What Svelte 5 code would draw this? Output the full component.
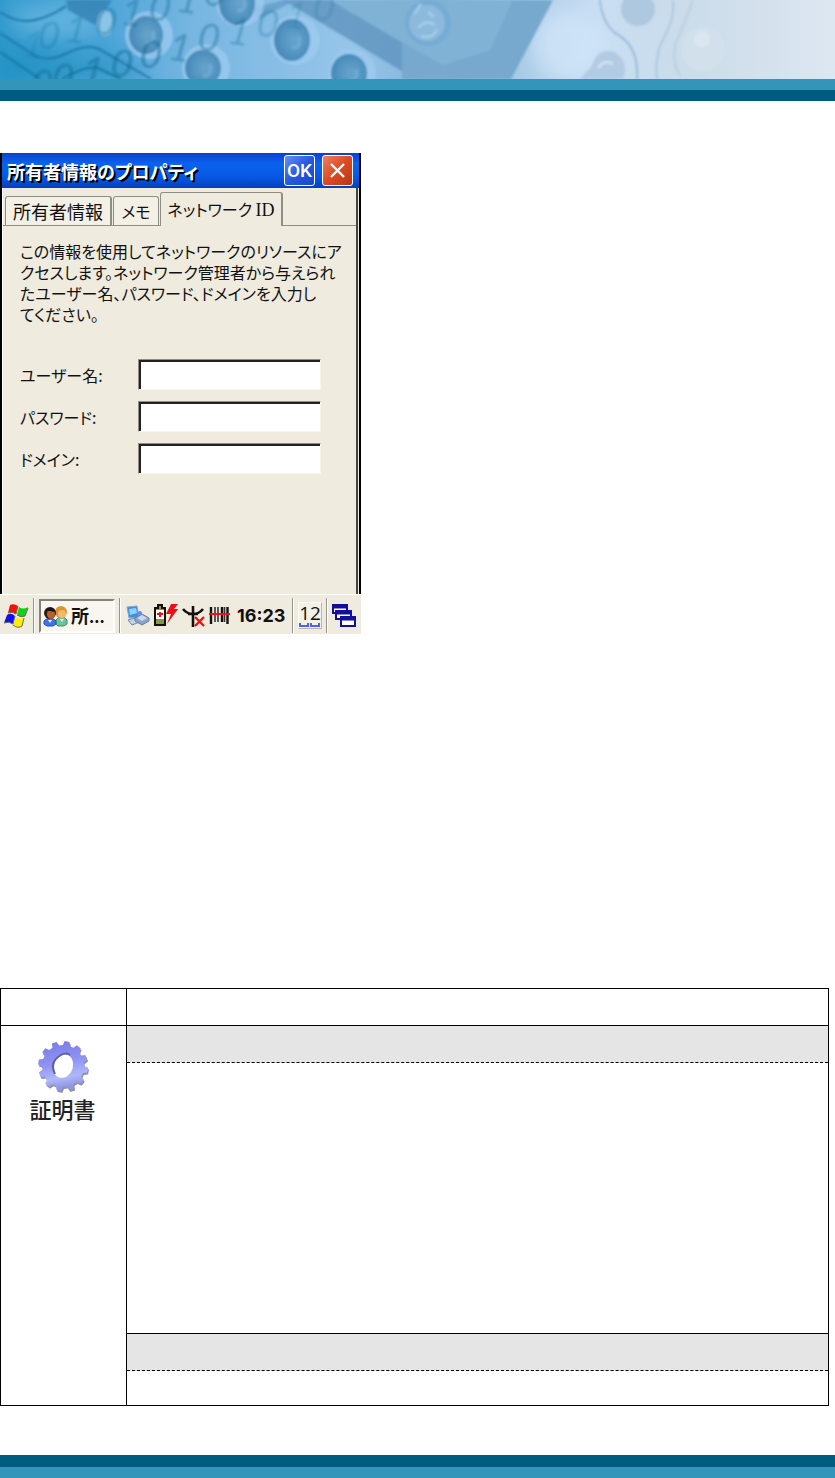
<script>
  const lines = [
    'この情報を使用してネットワークのリソースにア',
    'クセスします。ネットワーク管理者から与えられ',
    'たユーザー名、パスワード、ドメインを入力し',
    'てください。'
  ];
  const fields = [
    { id: 'user', label: 'ユーザー名:', type: 'text' },
    { id: 'password', label: 'パスワード:', type: 'password' },
    { id: 'domain', label: 'ドメイン:', type: 'text' }
  ];
  const vias = [
    { x: 146, y: 35, rx: 17, ry: 19, ring: 24 },
    { x: 203, y: 68, rx: 18, ry: 18, ring: 24 },
    { x: 237, y: 3, rx: 18, ry: 22, ring: 24 },
    { x: 292, y: 40, rx: 18, ry: 21, ring: 25 },
    { x: 349, y: 73, rx: 18, ry: 19, ring: 24 }
  ];
  const bits = [
    { t: '1', x: 33, y: 45, o: 0.3 }, { t: '0', x: 49, y: 36, o: 0.5 }, { t: '1', x: 76, y: 30, o: 0.5 },
    { t: '0', x: 106, y: 22, o: 0.7 }, { t: '1', x: 132, y: 13, o: 0.7 }, { t: '0', x: 160, y: 8, o: 0.8 },
    { t: '1', x: 188, y: 0, o: 0.8 }, { t: '0', x: 215, y: -7, o: 0.8 },
    { t: '0', x: 42, y: 84, o: 1 }, { t: '0', x: 63, y: 78, o: 1 }, { t: '1', x: 93, y: 71, o: 1 },
    { t: '0', x: 122, y: 64, o: 1 }, { t: '0', x: 151, y: 55, o: 1 }, { t: '1', x: 180, y: 48, o: 0.8 },
    { t: '0', x: 209, y: 38, o: 0.8 }, { t: '1', x: 239, y: 32, o: 0.6 }, { t: '0', x: 268, y: 24, o: 0.5 },
    { t: '1', x: 296, y: 16, o: 0.3 }, { t: '0', x: 324, y: 8, o: 0.3 }
  ];

  function gear(cx, cy, count) {
    const points = [];
    const step = (Math.PI * 2) / count;
    for (let i = 0; i < count; i++) {
      for (const [r, at] of [[21, 0], [25, 0.12], [25, 0.5], [21, 0.65]]) {
        const a = (i + at) * step;
        points.push(`${(cx + r * Math.cos(a)).toFixed(1)} ${(cy + r * Math.sin(a)).toFixed(1)}`);
      }
    }
    return `M${points.join('L')}Z`;
  }
</script>

<div class="page">
  <header>
    <svg class="banner" viewBox="0 0 835 79" preserveAspectRatio="none" aria-hidden="true">
      <defs>
        <linearGradient id="sky" x1="0" x2="1" y1="0" y2="0">
          <stop offset="0" stop-color="#2c98cc" />
          <stop offset="0.13" stop-color="#4ea6d8" />
          <stop offset="0.23" stop-color="#76b6e1" />
          <stop offset="0.42" stop-color="#97c5e9" />
          <stop offset="0.53" stop-color="#7fb3d9" />
          <stop offset="0.62" stop-color="#a9cae6" />
          <stop offset="0.72" stop-color="#c9def2" />
          <stop offset="0.83" stop-color="#cbdcea" />
          <stop offset="1" stop-color="#dde7f1" />
        </linearGradient>
        <radialGradient id="ball" cx="0.55" cy="0.5" r="0.6">
          <stop offset="0" stop-color="#68a4cd" />
          <stop offset="0.6" stop-color="#5193c0" />
          <stop offset="1" stop-color="#4285b2" />
        </radialGradient>
        <linearGradient id="shade" x1="0" x2="0" y1="0" y2="1">
          <stop offset="0" stop-color="#fff" stop-opacity="0.12" />
          <stop offset="0.5" stop-color="#1583b8" stop-opacity="0.02" />
          <stop offset="1" stop-color="#007ba9" stop-opacity="0.4" />
        </linearGradient>
        <filter id="soft" x="-20%" y="-20%" width="140%" height="140%"><feGaussianBlur stdDeviation="1" /></filter>
        <filter id="glow" x="-50%" y="-50%" width="200%" height="200%"><feGaussianBlur stdDeviation="9" /></filter>
      </defs>
      <rect width="835" height="79" fill="url(#sky)" />
      <path d="M0 0H75L150 79H0Z" fill="url(#shade)" filter="url(#glow)" />
      <ellipse cx="55" cy="22" rx="45" ry="16" fill="#86c8ee" opacity="0.4" filter="url(#glow)" />
      <ellipse cx="568" cy="45" rx="35" ry="35" fill="#d3e7fa" opacity="0.7" filter="url(#glow)" />
      <g filter="url(#soft)">
        <path d="M66 0H112L95 25L68 10Z" fill="#3584b6" opacity="0.85" />
        <ellipse cx="105" cy="23" rx="8" ry="13" fill="#9dceed" opacity="0.75" />
        <path d="M0 12Q18 24 35 20T66 6" fill="none" stroke="#2079a8" stroke-width="2" />
        <path d="M0 33L32 54Q47 63 65 54Q87 43 99 49L151 79" fill="none" stroke="#2079a8" stroke-width="2" />
        <path d="M0 52L40 79M62 79Q86 65 98 68L121 79" fill="none" stroke="#137ba0" stroke-width="2" />
        <path d="M283 0H345L420 52V79H415Z" fill="#6297c1" opacity="0.85" />
        <path d="M330 0H512L490 50L443 65L415 50Z" fill="#80b2d6" />
        <path d="M512 0H553L511 79H402V42L415 50L443 65L490 50Z" fill="#77a8ce" />
        <path d="M252 8L284 0L290 3L260 19Z" fill="#5693c0" opacity="0.6" />
        {#each vias as v}
          <ellipse cx={v.x + 3} cy={v.y} rx={v.ring} ry={v.ring} fill="#9dcbf0" opacity="0.75" />
          <ellipse cx={v.x} cy={v.y} rx={v.rx} ry={v.ry} fill="url(#ball)" />
          <path d="M{v.x} {v.y + 8}q10 0 7 -12" fill="none" stroke="#87bee3" stroke-width="4" opacity="0.4" />
        {/each}
        <circle cx="428" cy="23" r="23" fill="#75acd3" />
        <circle cx="427" cy="23" r="18" fill="#8bbadc" />
        <path d="M414 14L421 4M418 28q8 -9 17 -3M421 36q12 4 16 -7M428 12l6 5" stroke="#a3cae5" stroke-width="3" fill="none" />
        <path d="M580 79L592 66Q596 50 610 51A17 19 0 0 1 623 79Z" fill="#b2cbe3" />
        <path d="M598 68Q604 59 613 64" stroke="#d0e1f2" stroke-width="3" fill="none" />
        <path d="M600 0Q602 22 615 33Q639 45 637 79" fill="none" stroke="#9bbdd9" stroke-width="2" />
        <path d="M673 0Q675 17 665 36Q654 54 657 79" fill="none" stroke="#afc8de" stroke-width="2" />
        <path d="M693 0Q683 27 676 42Q671 62 680 76" fill="none" stroke="#bdcfdf" stroke-width="2" />
        <circle cx="638" cy="8" r="21" fill="#c8dced" />
        <circle cx="638" cy="9" r="17" fill="#adc8df" />
        <circle cx="703" cy="49" r="22" fill="#d2e0eb" />
        <circle cx="702" cy="39" r="8" fill="#dbe7f0" />
      </g>
      <g class="bits" filter="url(#soft)">
        {#each bits as b}
          <text transform="translate({b.x} {b.y}) rotate(8)" y="13" opacity={b.o}>{b.t}</text>
        {/each}
      </g>
    </svg>
    <div class="teal"></div>
    <div class="navy"></div>
  </header>

  <main>
    <section class="device" aria-label="所有者情報のプロパティ">
      <div class="window">
        <div class="title">
          <h1>所有者情報のプロパティ</h1>
          <button class="ok">OK</button>
          <button class="close" aria-label="閉じる">
            <svg width="17" height="17" viewBox="0 0 17 17"><path d="M2 2L15 15M15 2L2 15" stroke="#fff" stroke-width="2.4" /></svg>
          </button>
        </div>
        <div class="client">
          <div class="tabs" role="tablist">
            <button class="tab" role="tab" aria-selected="false">所有者情報</button>
            <button class="tab memo" role="tab" aria-selected="false">メモ</button>
            <button class="tab active" role="tab" aria-selected="true">ネットワーク <span>ID</span></button>
          </div>
          <div class="panel">
            <p>{#each lines as line, i}{line}{#if i < lines.length - 1}<br />{/if}{/each}</p>
            <form>
              {#each fields as f}
                <label for={f.id}>{f.label}</label>
                <input id={f.id} type={f.type} />
              {/each}
            </form>
          </div>
        </div>
      </div>
      <div class="taskbar">
        <button class="start" aria-label="スタート">
          <svg width="26" height="26" viewBox="0 0 26 26">
            <path d="M7 2Q11 0 15 3L13 11Q9 8 5 10Z" fill="#f0140c" />
            <path d="M16 4Q20 7 25 4L22 13Q18 15 14 12Z" fill="#10d018" />
            <path d="M4 12Q8 9 12 13L10 21Q6 18 1 20Z" fill="#1010f0" />
            <path d="M13 14Q17 17 21 15L19 23Q15 26 10 22Z" fill="#fff000" />
            <path d="M15 3L13 11Q9 8 5 10M25 5L22 13Q18 15 14 12M12 13L10 21Q6 18 1 20M21 15L19 23Q15 26 10 22" fill="none" stroke="#6b6754" stroke-width="1" />
          </svg>
        </button>
        <i class="rule"></i>
        <button class="task">
          <svg width="25" height="22" viewBox="0 0 25 22">
            <path d="M13 19V15Q18 8 24 15V19L21 21H15Z" fill="#6fc29c" stroke="#3e8f6c" />
            <path d="M1 19V16Q7 10 13 16V19L10 21H4Z" fill="#3f74e6" stroke="#2750b4" />
            <circle cx="18" cy="7" r="6" fill="#dd942f" />
            <ellipse cx="19" cy="9" rx="4" ry="4" fill="#f2b96c" />
            <circle cx="7" cy="8" r="6" fill="#2c1d18" />
            <ellipse cx="8" cy="9" rx="4" ry="5" fill="#b9602f" />
            <path d="M3 6Q6 0 11 4L12 7L7 6Z" fill="#17151a" />
            <path d="M5 15L7 18L9 15M17 14L19 17L21 14" fill="#efefe8" />
          </svg>
          <b>所<span>...</span></b>
        </button>
        <i class="rule"></i>
        <div class="tray">
          <svg width="25" height="23" viewBox="0 0 25 23">
            <path d="M2 3L12 2L14 13L4 14Z" fill="#3f8fe2" stroke="#7ca8d6" />
            <path d="M4 5L11 4L12 9L5 11Z" fill="#8fd0fa" />
            <path d="M3 16L13 13L17 17L7 21Z" fill="#c6d4e4" stroke="#6f86a2" />
            <path d="M10 14L17 10L24 14V17L17 21L10 17Z" fill="#8aa5c8" stroke="#6580a4" />
            <path d="M12 14L17 11L22 14L17 17Z" fill="#c9daf0" />
            <circle cx="15" cy="9" r="2" fill="#5d8ce0" />
          </svg>
          <svg width="26" height="23" viewBox="0 0 26 23">
            <path d="M5 1H9V4H12V21H2V4H5Z" fill="#8b924b" stroke="#111" stroke-width="2" />
            <rect x="3" y="6" width="8" height="9" fill="#fff" />
            <path d="M7 8V13M4 10H10" stroke="#f20c16" stroke-width="2" />
            <path d="M18 0H25L21 5H25L14 20L18 10H13Z" fill="#f20c16" />
          </svg>
          <svg class="antenna" width="24" height="23" viewBox="0 0 24 23">
            <path d="M1 4Q5 9 11 9T21 4M11 1V22M6 9H16" fill="none" stroke="#111" stroke-width="2.6" />
            <path d="M13 12L22 21M22 12L13 21" stroke="#f21016" stroke-width="2.4" />
          </svg>
          <svg width="21" height="20" viewBox="0 0 21 20">
            <path d="M2 1V18M13 1V16M18.500 1V18" stroke="#111" stroke-width="2.4" />
            <path d="M6 1V16M9 1V16M15.500 1V16" stroke="#333" stroke-width="1.600" />
            <path d="M0 8H21" stroke="#f21016" stroke-width="2" />
          </svg>
          <time>16:23</time>
        </div>
        <i class="rule"></i>
        <button class="input-mode" aria-label="入力パネル">
          <span>12</span>
          <svg width="22" height="5" viewBox="0 0 22 5"><path d="M1 0V3H9V0M12 0V3H20V0" fill="none" stroke="#5460f0" stroke-width="2" /></svg>
        </button>
        <i class="rule"></i>
        <button class="desktop" aria-label="デスクトップ">
          <svg width="24" height="24" viewBox="0 0 24 24">
            <g fill="#fff" stroke="#10109a" stroke-width="2">
              <rect x="1" y="1" width="14" height="8" /><path d="M1 3H15" stroke-width="3" />
              <rect x="4" y="7" width="15" height="8" /><path d="M4 9H19" stroke-width="3" />
              <rect x="9" y="13" width="14" height="9" /><path d="M9 15H23" stroke-width="3" />
            </g>
          </svg>
        </button>
      </div>
    </section>

    <table>
      <colgroup><col class="icon-col" /><col /></colgroup>
      <tbody>
        <tr class="head"><td></td><td></td></tr>
        <tr class="band">
          <td class="item" rowspan="4">
            <figure>
              <svg width="54" height="54" viewBox="0 0 54 54" aria-hidden="true">
                <defs>
                  <linearGradient id="metal" x1="0" y1="0" x2="0.2" y2="1">
                    <stop offset="0" stop-color="#7778e6" />
                    <stop offset="0.5" stop-color="#8f93f2" />
                    <stop offset="0.8" stop-color="#afb8fa" />
                    <stop offset="1" stop-color="#8d96de" />
                  </linearGradient>
                  <mask id="hole"><rect width="54" height="54" fill="#fff" /><ellipse cx="27" cy="26" rx="10" ry="12" transform="rotate(18 27 26)" fill="#000" /></mask>
                  <filter id="edge"><feGaussianBlur stdDeviation="0.4" /></filter>
                </defs>
                <g filter="url(#edge)">
                  <g mask="url(#hole)">
                    <path d={gear(28, 28, 12)} fill="#9193a8" />
                    <path d={gear(27, 26, 12)} fill="url(#metal)" />
                  </g>
                  <path d="M19 34Q13 22 25 15Q30 12 34 15" fill="none" stroke="#5d609a" stroke-width="2" />
                </g>
              </svg>
              <figcaption>証明書</figcaption>
            </figure>
          </td>
          <td></td>
        </tr>
        <tr class="large"><td></td></tr>
        <tr class="band"><td></td></tr>
        <tr class="last"><td></td></tr>
      </tbody>
    </table>
  </main>

  <footer>
    <div class="navy"></div>
    <div class="teal"></div>
  </footer>
</div>

<style>
  :global(body) { margin: 0; background: #fff; }
  .page { font-family: "Noto Sans CJK JP", sans-serif; color: #111; }
  .page * { box-sizing: border-box; }
  .banner { display: block; width: 100%; height: 79px; }
  .bits text { font: italic 38px Lato, sans-serif; text-anchor: middle; fill: #126890; fill-opacity: 0.5; }
  .teal { height: 11px; background: #3295b9; }
  .navy { height: 11px; background: #005b83; }
  footer .navy { height: 12px; }
  main { padding: 52px 6px 49px 0; }

  .device { width: 361px; font-feature-settings: "palt"; }
  .window { border-left: 2px solid #000; border-right: 2px solid #000; background: #efebde; }
  .title {
    display: flex; align-items: center; gap: 7px; height: 35px; padding: 0 6px 0 5px;
    background: linear-gradient(#0d3fd0, #0b62ee 30%, #0857e3 70%, #0340bd);
  }
  h1 { flex: 1; margin: 0; font-size: 18px; line-height: 24px; font-weight: 700; color: #fff; text-shadow: 2px 2px 0 #000; white-space: nowrap; }
  button { margin: 0; padding: 0; font: inherit; font-feature-settings: inherit; color: inherit; }
  .ok, .close { display: flex; align-items: center; justify-content: center; width: 31px; height: 31px; border: 1px solid #fff; border-radius: 3px; color: #fff; }
  .ok { background: linear-gradient(135deg, #6790f1, #2858dc 50%, #1746c9); font: 500 19px Roboto, sans-serif; }
  .close { background: linear-gradient(135deg, #ec8165, #dc4a25 50%, #b93510); }

  .client { height: 406px; margin-right: 1px; border-left: 1px solid #fff; border-right: 2px solid #444; }
  .tabs { display: flex; align-items: flex-end; gap: 1px; height: 38px; padding-left: 2px; border-bottom: 1px solid #8e8d86; }
  .tab {
    width: 107px; height: 29px; border: 1px solid #8e8d86; border-width: 1px 2px 0 1px; border-radius: 3px 3px 0 0;
    background: #f3f0e5; font-size: 18px; line-height: 26px; white-space: nowrap;
  }
  .memo { width: 46px; border-right-width: 1px; font-size: 16px; }
  .active { width: 123px; height: 34px; margin-bottom: -1px; background: #efebde; font-size: 16px; line-height: 30px; }
  .active span { font-family: "Liberation Serif", serif; font-size: 18px; }
  .panel { padding: 15px 17px 0; }
  p { margin: 0; font-size: 16px; line-height: 21px; white-space: nowrap; }
  form { display: grid; grid-template-columns: 118px 183px; gap: 11px 0; margin-top: 34px; }
  label { align-self: center; font-size: 16px; line-height: 24px; }
  input {
    width: 100%; height: 31px; padding: 0 4px; background: #fff; outline: 0; border-radius: 0;
    border: 1px solid; border-color: #8e8d86 #f8f5ec #f8f5ec #8e8d86; box-shadow: inset 2px 2px 0 #222;
  }

  .taskbar { display: flex; align-items: center; height: 40px; padding: 2px 5px 0 3px; background: #efebde; border-top: 1px solid #fff; }
  .taskbar button { background: none; border: 0; }
  .taskbar svg { display: block; flex: none; }
  .rule { flex: none; width: 2px; height: 35px; margin: 0 4px; border-left: 1px solid #96958e; border-right: 1px solid #fff; }
  .taskbar .task {
    display: flex; align-items: center; gap: 3px; width: 76px; height: 34px; padding: 0 2px; white-space: nowrap;
    border: 2px solid; border-color: #83827c #fff #fff #83827c; background: #f8f6ef; font-size: 18px; line-height: 26px;
  }
  .task span { font-size: 16px; }
  .tray { display: flex; align-items: center; gap: 3px; flex: 1; }
  .antenna { margin-top: 2px; }
  time { font: 700 18px Inter, sans-serif; margin-left: 4px; }
  .taskbar .input-mode { width: 24px; height: 27px; background: #f4f1e7; border: 1px solid; border-color: #fff #bbb8ad #bbb8ad #fff; }
  .input-mode span { display: block; font: 19px/20px "Open Sans", sans-serif; }

  table { width: 100%; margin-top: 354px; border-collapse: collapse; table-layout: fixed; }
  .icon-col { width: 126px; }
  td { padding: 0; border: 1px solid #000; }
  .head { height: 37px; }
  .band { height: 37px; }
  .band td { background: #e5e5e5; border-bottom: 1px dashed #000; }
  .band .item { background: #fff; border-bottom: 1px solid #000; vertical-align: top; }
  .large { height: 271px; }
  .last { height: 35px; }
  .large td, .last td { border-top: 1px dashed #000; }
  figure { display: flex; flex-direction: column; align-items: center; width: 67px; margin: 14px 0 0 28px; }
  figcaption { font-size: 22px; line-height: 28px; font-weight: 500; color: #222; white-space: nowrap; }
</style>
